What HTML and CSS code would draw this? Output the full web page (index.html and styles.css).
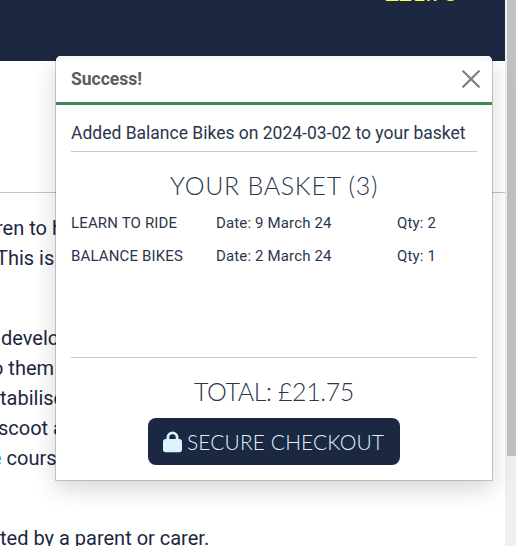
FILE: index.html
```html
<!DOCTYPE html>
<html lang="en">
<head>
<meta charset="utf-8">
<title>Your basket</title>
<link rel="stylesheet" href="styles.css">
</head>
<body>
<div class="page">
  <header class="site-header"><span class="header-total">£21.75</span></header>
  <main class="content">
    <hr class="page-rule">
    <p class="para"><span class="l1">ren to h</span><br><span class="l2">This is</span></p>
    <p class="para"><span class="l3">develop</span><br><span class="l4">o them</span><br><span class="l5">tabilise</span><br><span class="l6">scoot a</span><br><span class="l7"><a class="link">e</a> cours</span></p>
    <p class="para"><span class="l8">ted by a parent or carer.</span></p>
  </main>
</div>
<div class="scrollbar"><div class="thumb"></div></div>
<section class="toast">
  <div class="toast-header">
    <strong class="title">Success!</strong>
    <svg class="close" viewBox="0 0 18 18"><path d="M1.2 1.2 16.8 16.8M16.8 1.2 1.2 16.8"/></svg>
  </div>
  <div class="toast-body">
    <p class="message"><span>Added Balance Bikes on 2024-03-02 to your basket</span></p>
    <h2 class="basket-title"><span>YOUR BASKET (3)</span></h2>
    <div class="items">
      <div class="item"><span class="n1">LEARN TO RIDE</span><span>Date: 9 March 24</span><span>Qty: 2</span></div>
      <div class="item"><span class="n2">BALANCE BIKES</span><span>Date: 2 March 24</span><span>Qty: 1</span></div>
    </div>
    <div class="total"><span>TOTAL: £21.75</span></div>
    <a class="checkout">
      <svg class="lock" viewBox="0 0 19 22"><path fill-rule="evenodd" d="M3.5 8V6.5a6 6 0 0 1 12 0V8h.7A2.8 2.8 0 0 1 19 10.800V18.500a2.800 2.800 0 0 1-2.800 2.800H2.800A2.800 2.800 0 0 1 0 18.500V10.800A2.800 2.800 0 0 1 2.800 8ZM6.300 8h6.400V6.500a3.200 3.200 0 0 0-6.400 0Z"/></svg>
      <span>SECURE CHECKOUT</span>
    </a>
  </div>
</section>
</body>
</html>
```
FILE: styles.css
```css
* { box-sizing: border-box; }
body {
  margin: 0;
  height: 546px;
  display: flex;
  overflow: hidden;
  background: #fff;
  color: #1c2841;
  font-family: Roboto, sans-serif;
}
.page { width: 505px; overflow: hidden; }
.site-header {
  height: 61px;
  background: #1c2841;
  overflow: hidden;
}
.header-total {
  display: block;
  margin: -23px 0 0 385px;
  font: 400 24px/30px Lato, sans-serif;
  letter-spacing: -.4px;
  color: #ff3;
}
.content { padding-top: 131px; }
.page-rule { margin: 0 0 20px; border: 0; border-top: 1px solid #c2c4cc; }
.para {
  margin: 0 0 50px;
  font-size: 20px;
  line-height: 30px;
  white-space: nowrap;
}
.l1 { margin-left: -4px; }
.l2 { margin-left: -4px; }
.l3 { margin-left: 1px; }
.l4 { margin-left: -8px; }
.l6 { margin-left: -2px; }
.l7 { margin-left: -9px; }
.link { color: #2a9fd6; }
.scrollbar { width: 11px; padding-left: 2px; background: #f0f0f0; }
.thumb { height: 456px; background: #c1c1c1; }
.toast {
  position: absolute;
  left: 55px;
  top: 56px;
  width: 438px;
  height: 425px;
  border: 1px solid rgba(0, 0, 0, .18);
  border-top: 0;
  border-radius: 5px 5px 0 0;
  background: #fff;
  background-clip: padding-box;
  box-shadow: 0 8px 24px rgba(0, 0, 0, .16);
  color: #2b364d;
}
.toast-header {
  height: 49px;
  padding: 0 12px 0 15px;
  display: flex;
  align-items: center;
  justify-content: space-between;
  border-bottom: 3px solid #3f8757;
  border-radius: 5px 5px 0 0;
  background: linear-gradient(#f9f9fa 5px, #fff 5px);
}
.title { font-size: 17.5px; font-weight: 700; color: #5a5c60; }
.close { width: 18px; height: 18px; stroke: #7f7f7f; stroke-width: 2.2; stroke-linecap: round; }
.toast-body { padding: 15px 15px 0; }
.message {
  margin: 0;
  height: 32px;
  font-size: 17.5px;
  line-height: 26px;
  white-space: nowrap;
  border-bottom: 1px solid #c6c9cf;
}
.basket-title, .total {
  margin: 0;
  font: 300 25px/30px Lato, sans-serif;
  text-align: center;
}
.basket-title { padding-top: 18px; letter-spacing: .7px; }
.items { height: 158px; padding-top: 7px; border-bottom: 1px solid #c6c9cf; }
.item {
  display: grid;
  grid-template-columns: 145px 181px 1fr;
  height: 33px;
  font-size: 15px;
  letter-spacing: .15px;
  line-height: 33px;
  white-space: nowrap;
}
.total { padding-top: 18px; letter-spacing: -.4px; }
.checkout {
  width: 252px;
  height: 47px;
  margin: 12px auto 0;
  padding-left: 15px;
  display: flex;
  align-items: center;
  border-radius: 8px;
  background: #1c2841;
  color: #d9f3fb;
  font: 300 21px/30px Lato, sans-serif;
  letter-spacing: .1px;
  white-space: nowrap;
}
.checkout span { margin-left: 5px; }
.lock { width: 19px; height: 22px; fill: #dcf5fd; }
```
